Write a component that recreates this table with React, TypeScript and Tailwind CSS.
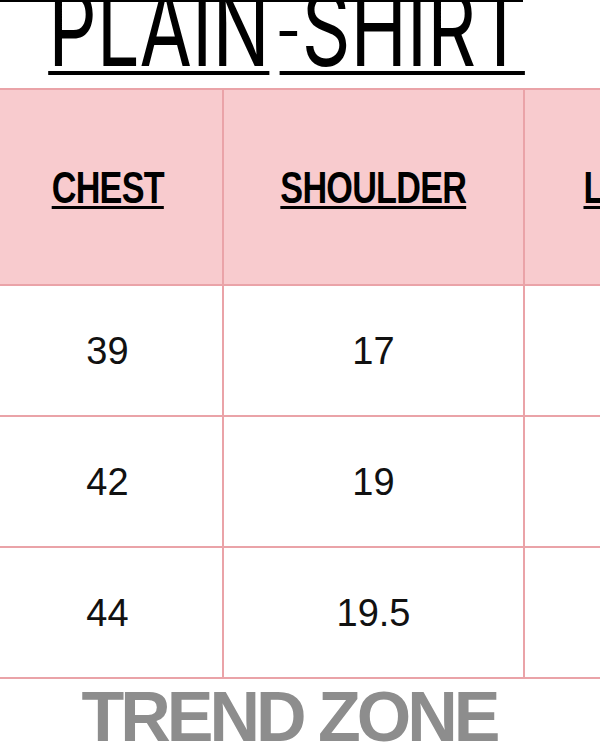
export default function App() {
  const rows: [string, string][] = [
    ["39", "17"],
    ["42", "19"],
    ["44", "19.5"],
  ];
  return (
    <div
      className="relative w-[600px] h-[750px] overflow-hidden bg-white"
      style={{ fontFamily: '"Liberation Sans", Arial, sans-serif' }}
    >
      <div className="h-[88px] flex items-end justify-center pr-[26px] overflow-hidden">
        <div
          className="flex items-end scale-x-[0.73] mb-[13px]"
          style={{ fontFamily: 'Inter, "Noto Sans", sans-serif' }}
        >
          <span className="text-[104px] font-normal leading-[82px] text-black border-b-[4px] border-black pb-[2px]">
            PLAIN
          </span>
          <span className="flex items-end text-[104px] font-normal leading-[82px] text-black border-b-[4px] border-black pb-[2px] ml-[14px]">
            <span className="inline-block w-[24px] h-[5px] bg-black mb-[33px] mr-[6px]" />
            <span>SHIRT</span>
          </span>
        </div>
      </div>
      <div className="absolute top-0 left-0 h-[2px] w-[523px] bg-black" />

      <div className="ml-[-7px] w-[820px]">
        <div className="flex h-[198px] bg-[#f8cbce] border-t-2 border-b-2 border-[#eaa3a8]">
          <HeaderCell label="CHEST" w="w-[231px]" />
          <HeaderCell label="SHOULDER" w="w-[301px]" />
          <HeaderCell label="LENGTH" w="w-[252px]" last />
        </div>
        {rows.map((r, i) => (
          <div key={i} className="flex h-[131px] border-b-2 border-[#eaa3a8]">
            <DataCell value={r[0]} w="w-[231px]" />
            <DataCell value={r[1]} w="w-[301px]" />
            <DataCell value="" w="w-[252px]" last />
          </div>
        ))}
      </div>

      <div className="flex justify-center pr-[22px] mt-[-2px]">
        <span className="text-[70px] font-bold text-[#8d8d8d] tracking-[-4px] leading-[80px]">
          TREND ZONE
        </span>
      </div>
    </div>
  );
}

function HeaderCell({ label, w, last }: { label: string; w: string; last?: boolean }) {
  return (
    <div
      className={`${w} h-full flex items-center justify-center ${last ? "" : "border-r-2 border-[#eaa3a8]"}`}
    >
      <span className="inline-block scale-x-[0.76] text-[45px] font-bold text-black underline decoration-[3px] underline-offset-[3px] tracking-[-1px] leading-none">
        {label}
      </span>
    </div>
  );
}

function DataCell({ value, w, last }: { value: string; w: string; last?: boolean }) {
  return (
    <div
      className={`${w} h-full flex items-center justify-center ${last ? "" : "border-r-2 border-[#eaa3a8]"}`}
    >
      <span className="text-[38px] text-[#111] leading-none">{value}</span>
    </div>
  );
}
